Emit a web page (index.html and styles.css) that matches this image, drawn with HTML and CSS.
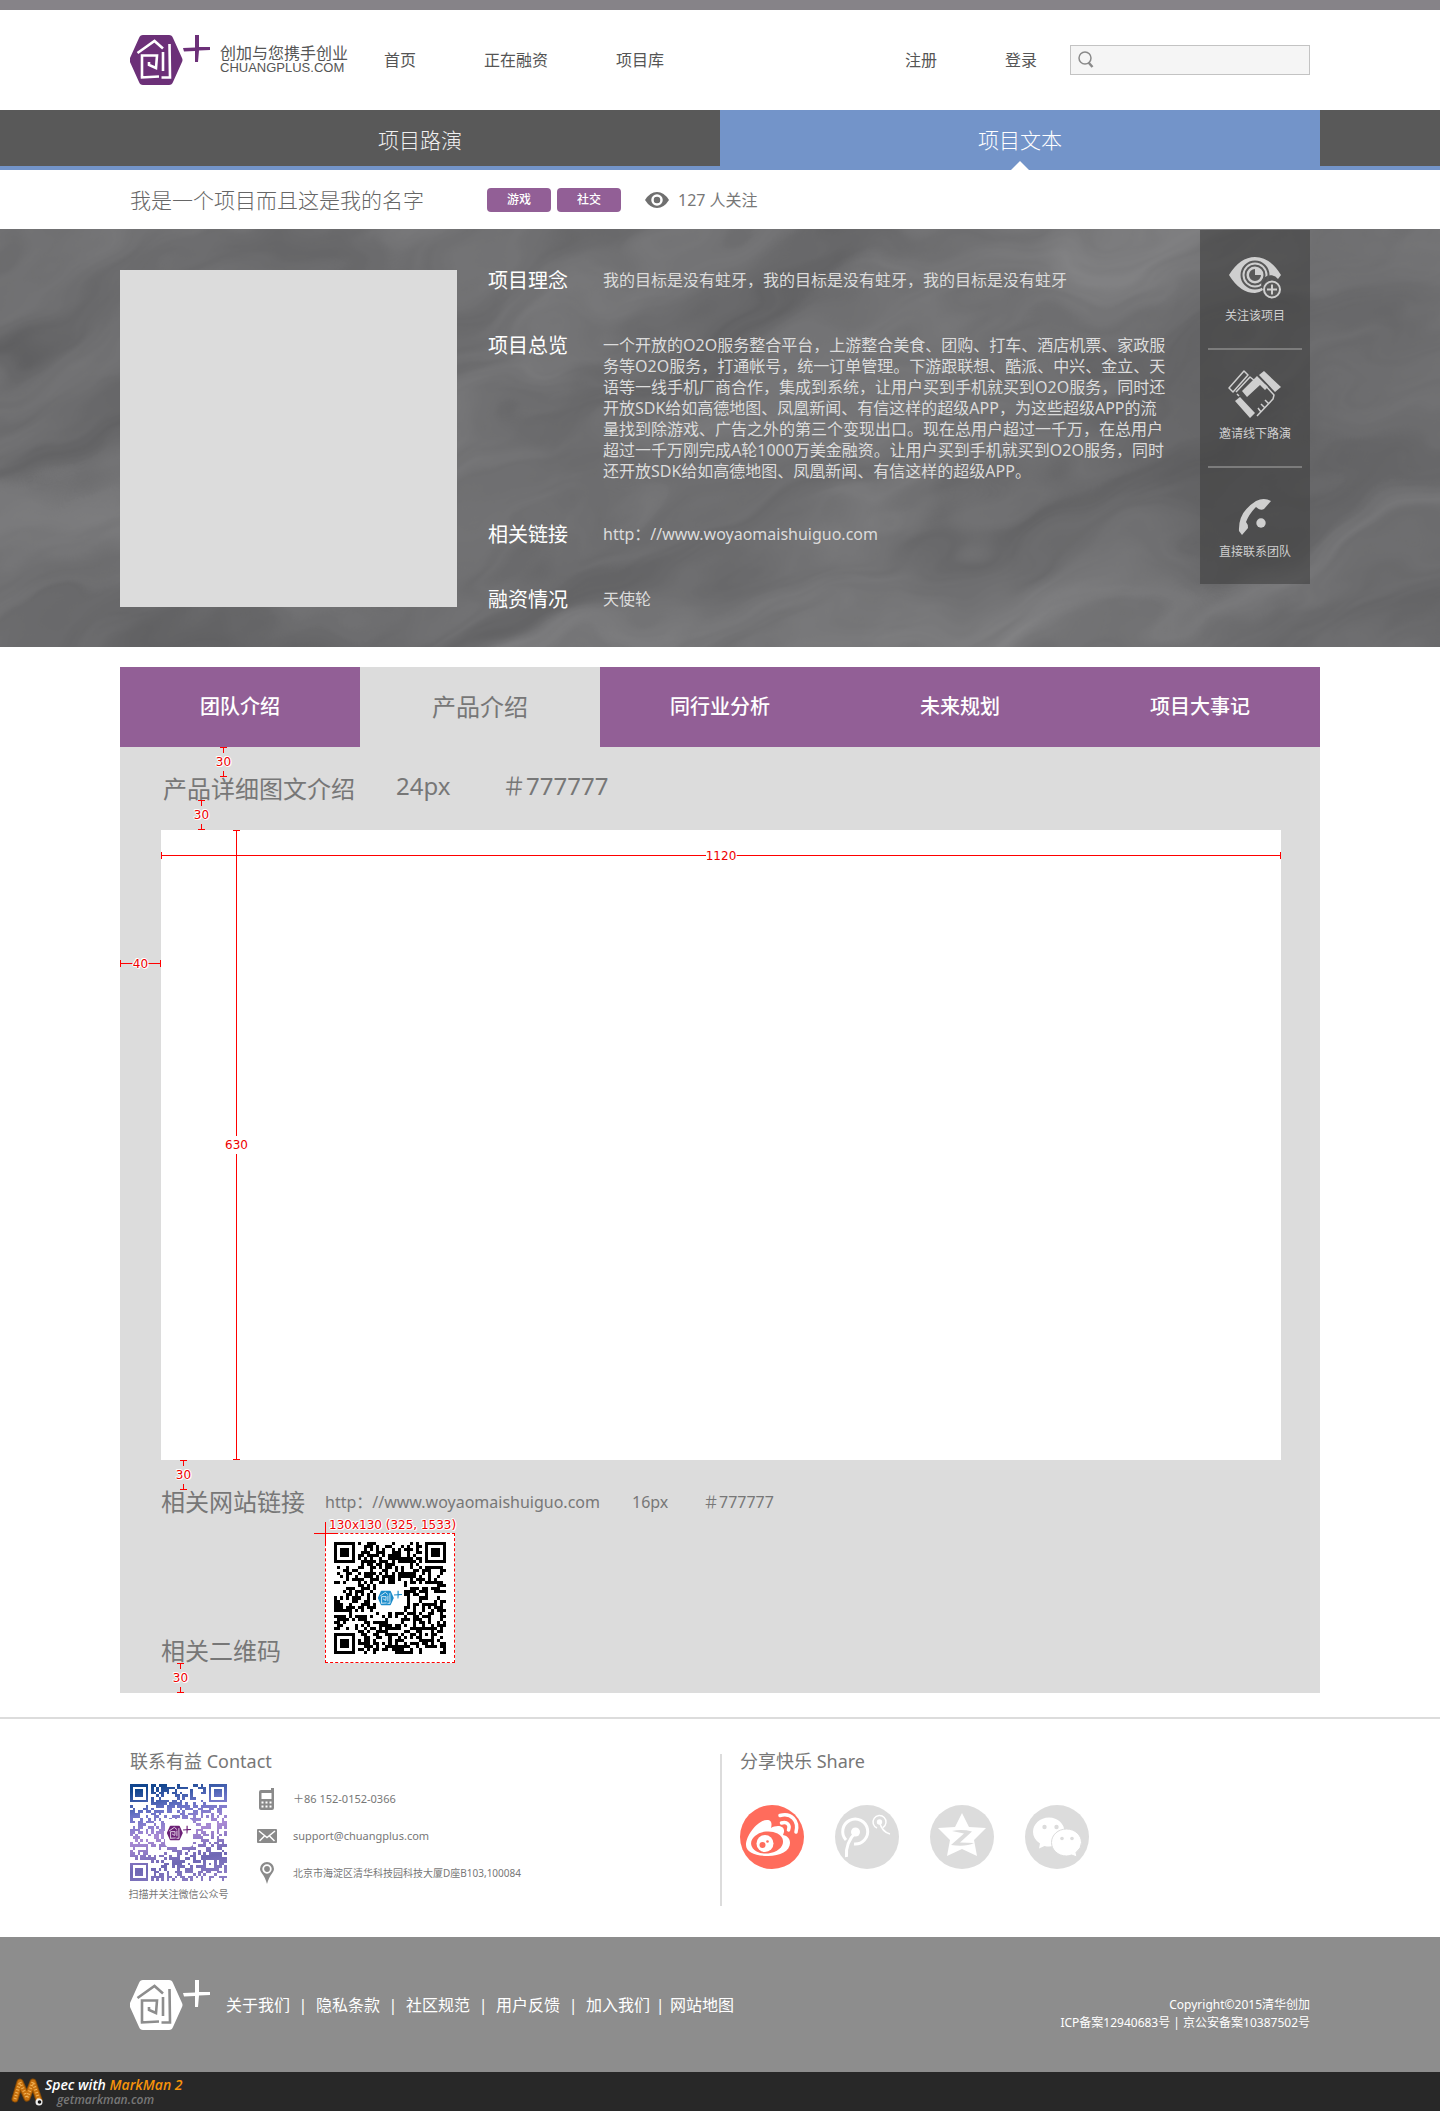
FILE: index.html
```html
<!DOCTYPE html>
<html lang="zh-CN">
<head>
<meta charset="utf-8">
<meta name="viewport" content="width=device-width, initial-scale=1">
<title>创加 - 项目文本</title>
<link rel="stylesheet" href="styles.css">
</head>
<body>
<svg class="defs" width="0" height="0" aria-hidden="true">
  <defs>
    <symbol id="logo" viewBox="0 0 80 50">
      <path fill="currentColor" d="M13 0H39Q42 0 43 3L52 23Q53 25 52 27L43 47Q42 50 39 50H13Q10 50 9 47L0 27Q-1 25 0 23L9 3Q10 0 13 0Z"/>
      <path fill="currentColor" d="M65 0L69 0 69 12 80 12 80 15 69 15.500 68 27 65 27 65 16 54 16.500 53 13 65 12.500Z"/>
      <path class="logo-line" fill="none" stroke-width="2.600" d="M7.500 18L24.500 6 33 13.500M12 42.500V20.500H27L26 33 19 30V27M10.700 42.500L29 41.500M31.500 42.500H40L39.500 9M33 17V36"/>
    </symbol>
  </defs>
</svg>

<header class="header">
  <div class="wrap header-in">
    <a class="brand" href="#">
      <svg class="logo" viewBox="0 0 80 50" aria-hidden="true"><use href="#logo"/></svg>
      <span class="brand-text"><span class="brand-cn">创加与您携手创业</span><span class="brand-en">CHUANGPLUS.COM</span></span>
    </a>
    <nav class="menu"><a href="#">首页</a><a href="#">正在融资</a><a href="#">项目库</a></nav>
    <div class="account"><a href="#">注册</a><a href="#">登录</a></div>
    <form class="search">
      <svg width="16" height="18" viewBox="0 0 16 18" fill="none" stroke="#8a8a8a" aria-hidden="true"><circle cx="7" cy="7" r="6" stroke-width="1.500"/><path d="M10.500 11.500L14.500 16" stroke-width="2.500"/></svg>
      <input type="search" aria-label="搜索">
    </form>
  </div>
</header>

<nav class="modes">
  <div class="wrap modes-in"><a href="#">项目路演</a><a class="on" href="#">项目文本</a></div>
</nav>

<main>
  <div class="wrap title-row">
    <h1>我是一个项目而且这是我的名字</h1>
    <div class="tags"><a href="#">游戏</a><a href="#">社交</a></div>
    <p class="followers">
      <svg width="24" height="16" viewBox="0 0 24 16" aria-hidden="true"><path fill="#6f6f6f" d="M0 8Q5 0 12 0T24 8Q19 16 12 16T0 8Z"/><circle cx="12" cy="8" r="4.500" fill="none" stroke="#fff" stroke-width="2.500"/><path d="M12 8V5A3 3 0 1 0 15 8Z" fill="#6f6f6f"/></svg>
      127 人关注
    </p>
  </div>

  <section class="hero">
    <svg class="marble" aria-hidden="true">
      <filter id="veins" x="0" y="0" width="100%" height="100%" color-interpolation-filters="sRGB">
        <feTurbulence type="fractalNoise" baseFrequency="0.002 0.009" numOctaves="5" seed="12" result="cloud"/>
        <feTurbulence type="fractalNoise" baseFrequency="0.005 0.009" numOctaves="3" seed="4" result="swirl"/>
        <feDisplacementMap in="cloud" in2="swirl" scale="220" xChannelSelector="R" yChannelSelector="G"/>
        <feColorMatrix values="0.190 0 0 0 0.342  0.190 0 0 0 0.342  0.190 0 0 0 0.349  0 0 0 0 1"/>
      </filter>
      <rect x="-20%" y="-100%" width="140%" height="300%" filter="url(#veins)" transform="rotate(-20 720 200)"/>
    </svg>
    <div class="wrap hero-in">
      <div class="cover"></div>
      <dl class="facts">
        <div><dt>项目理念</dt><dd>我的目标是没有蛀牙，我的目标是没有蛀牙，我的目标是没有蛀牙</dd></div>
        <div><dt>项目总览</dt><dd>一个开放的O2O服务整合平台，上游整合美食、团购、打车、酒店机票、家政服<br>务等O2O服务，打通帐号，统一订单管理。下游跟联想、酷派、中兴、金立、天<br>语等一线手机厂商合作，集成到系统，让用户买到手机就买到O2O服务，同时还<br>开放SDK给如高德地图、凤凰新闻、有信这样的超级APP，为这些超级APP的流<br>量找到除游戏、广告之外的第三个变现出口。现在总用户超过一千万，在总用户<br>超过一千万刚完成A轮1000万美金融资。让用户买到手机就买到O2O服务，同时<br>还开放SDK给如高德地图、凤凰新闻、有信这样的超级APP。</dd></div>
        <div><dt>相关链接</dt><dd><a href="#">http：//www.woyaomaishuiguo.com</a></dd></div>
        <div><dt>融资情况</dt><dd>天使轮</dd></div>
      </dl>
      <div class="actions">
        <button type="button">
          <svg width="54" height="44" viewBox="0 0 54 44" aria-hidden="true"><path fill="#cfcfcf" d="M1 19Q12 1 27 1T53 19L50 23A9 9 0 0 0 35 34Q31 37 27 37Q12 37 1 19Z"/><g fill="none" stroke="#595959" stroke-width="2"><circle cx="27" cy="19" r="13.500"/><circle cx="27" cy="19" r="9.500"/></g><path fill="#595959" d="M27 13V19H33A6 6 0 1 1 27 13Z"/><circle cx="44" cy="33.500" r="8" fill="#595959" stroke="#cfcfcf" stroke-width="2"/><path d="M44 28.500V38.500M39 33.500H49" stroke="#cfcfcf" stroke-width="2"/></svg>
          <span>关注该项目</span>
        </button>
        <button type="button">
          <svg width="54" height="48" viewBox="0 0 54 48" aria-hidden="true"><g fill="none" stroke="#cfcfcf" stroke-width="1.500" stroke-linejoin="round"><path d="M1 18L16 1 20 5 5 22Z"/><path d="M8 22L22 7 27 11M11 26L9 24"/><path d="M29 46L45 29 46 25 37 15M33 42L30 38M37 38L33 34M41 34L37 30"/></g><path fill="#cfcfcf" d="M14 21L29 6 40 17 37 20 32 15 19 27ZM31 5L36 1 53 17 47 22ZM7 31L12 27 27 43 22 48Z"/></svg>
          <span>邀请线下路演</span>
        </button>
        <button type="button">
          <svg width="34" height="38" viewBox="0 0 34 38" aria-hidden="true"><path fill="#cfcfcf" d="M33 3Q26-1 18 3Q0 14 1 33L4 37 10 30Q10 26 8 24Q11 16 18 9Q22 13 26 11Z"/><circle cx="23" cy="25" r="4.700" fill="#cfcfcf"/></svg>
          <span>直接联系团队</span>
        </button>
      </div>
    </div>
  </section>

  <section class="wrap detail">
    <nav class="sections"><a href="#">团队介绍</a><a class="on" href="#">产品介绍</a><a href="#">同行业分析</a><a href="#">未来规划</a><a href="#">项目大事记</a></nav>
    <div class="panel">
      <div class="panel-head"><h2>产品详细图文介绍</h2><span>24px</span><span>＃777777</span>
        <i class="dim tall head-top"><b>30</b></i><i class="dim tall head-bottom"><b>30</b></i>
      </div>
      <div class="canvas">
        <i class="dim wide box-width"><b>1120</b></i>
        <i class="dim tall box-height"><b>630</b></i>
        <i class="dim wide box-margin"><b>40</b></i>
      </div>
      <div class="row link-row"><h2>相关网站链接</h2><a href="#">http：//www.woyaomaishuiguo.com</a><span>16px</span><span>＃777777</span>
        <i class="dim tall link-top"><b>30</b></i>
      </div>
      <div class="row code-row"><h2>相关二维码</h2>
        <div class="code">
          <svg class="qr" data-seed="7" viewBox="0 0 37 37" role="img" aria-label="项目二维码"></svg>
          <span class="code-logo blue"><svg viewBox="0 0 80 50"><use href="#logo"/></svg></span>
          <b class="code-size">130x130 (325, 1533)</b>
        </div>
        <i class="dim tall code-bottom"><b>30</b></i>
      </div>
    </div>
  </section>
</main>

<footer>
  <div class="contact-band">
    <div class="wrap contact-in">
      <section class="contact">
        <h3>联系有益 Contact</h3>
        <div class="contact-body">
          <div class="wechat">
            <div class="wechat-code">
              <svg class="qr" data-seed="23" data-fill="url(#dusk)" viewBox="0 0 37 37" role="img" aria-label="微信公众号二维码"><defs><linearGradient id="dusk" gradientUnits="userSpaceOnUse" x1="14" y1="0" x2="22" y2="37"><stop offset="0" stop-color="#12468f"/><stop offset=".25" stop-color="#6c74c8"/><stop offset=".5" stop-color="#a98ad4"/><stop offset=".8" stop-color="#6f68b4"/><stop offset="1" stop-color="#8a7cc4"/></linearGradient></defs></svg>
              <span class="code-logo purple"><svg viewBox="0 0 80 50"><use href="#logo"/></svg></span>
            </div>
            <p>扫描并关注微信公众号</p>
          </div>
          <ul class="ways">
            <li><svg width="20" height="22" viewBox="0 0 20 22" aria-hidden="true"><path fill="#8a8a8a" d="M4 2H14V0H17V20Q17 22 15 22H4Q2 22 2 20V4Q2 2 4 2Z"/><path fill="#fff" d="M4.500 5H14.500V11H4.500ZM4.500 13.500h2v2h-2zM8.500 13.500h2v2h-2zM12.500 13.500h2v2h-2zM4.500 17.500h2v2h-2zM8.500 17.500h2v2h-2zM12.500 17.500h2v2h-2z"/></svg>＋86 152-0152-0366</li>
            <li><svg width="20" height="14" viewBox="0 0 20 14" aria-hidden="true"><rect width="20" height="14" rx="1" fill="#8a8a8a"/><path d="M2 2L10 8.500 18 2M2.500 12L7.500 7M17.500 12L12.500 7" fill="none" stroke="#fff" stroke-width="1.500"/></svg><a href="#">support@chuangplus.com</a></li>
            <li class="address"><svg width="20" height="22" viewBox="0 0 20 22" aria-hidden="true"><path fill="#8a8a8a" d="M10 22Q8 15 5 11.500Q3 9 3 7A7 7 0 0 1 17 7Q17 9 15 11.500Q12 15 10 22Z"/><circle cx="10" cy="7" r="3.800" fill="none" stroke="#fff" stroke-width="1.800"/></svg>北京市海淀区清华科技园科技大厦D座B103,100084</li>
          </ul>
        </div>
      </section>
      <section class="share">
        <h3>分享快乐 Share</h3>
        <div class="share-list">
          <a href="#" aria-label="新浪微博"><svg viewBox="0 0 64 64"><circle cx="32" cy="32" r="32" fill="#ff6c5c"/><path fill="#fff" d="M6 40C6 30 18 15 27 15C32 15 32 19 31 23C36 20 45 20 44 27L43 30C48 31 50 34 50 38C50 46 40 51 28 51C15 51 6 47 6 40Z"/><ellipse cx="27" cy="37.500" rx="16" ry="11" fill="#ff6c5c" transform="rotate(-6 27 37)"/><circle cx="25" cy="38.500" r="8.500" fill="#fff"/><circle cx="22.500" cy="40" r="3" fill="#ff6c5c"/><circle cx="27.500" cy="36.500" r="1.300" fill="#ff6c5c"/><path d="M40 10.500C51 7 59 16 56 27M41.500 18C47 16 50.500 20 48.500 25" fill="none" stroke="#fff" stroke-width="3.500" stroke-linecap="round"/></svg></a>
          <a href="#" aria-label="腾讯微博"><svg viewBox="0 0 64 64"><circle cx="32" cy="32" r="32" fill="#dcdcdc"/><g fill="none" stroke="#fff"><path d="M11 35A12.500 12.500 0 1 1 19 39" stroke-width="3"/><path d="M21 27Q10 38 11.500 52" stroke-width="3"/><path d="M42 23A6.500 6.500 0 1 1 48 22.500M44.500 17Q47 27 55 29" stroke-width="1.500"/></g><circle cx="20.500" cy="27" r="4.500" fill="#fff"/><circle cx="44.500" cy="17" r="2.700" fill="#fff"/></svg></a>
          <a href="#" aria-label="QQ空间"><svg viewBox="0 0 64 64"><circle cx="32" cy="32" r="32" fill="#dcdcdc"/><path fill="#fff" d="M32 8L39 22 56 23 44 35 47 51 32 44 17 51 20 35 8 23 25 22Z"/><path fill="#dcdcdc" d="M22 26Q32 24 42 26.500L30 37.500 44 38Q36 42 21 40L34 28.500Z"/></svg></a>
          <a href="#" aria-label="微信"><svg viewBox="0 0 64 64"><circle cx="32" cy="32" r="32" fill="#dcdcdc"/><path fill="#fff" d="M24 12.500C33 12.500 39.500 19 39.500 27S33 41.500 24 41.500Q21.500 41.500 19.500 41L14 43.500 15 38.500Q8 34 8 27C8 19 15 12.500 24 12.500Z"/><path fill="#fff" stroke="#dcdcdc" d="M41.500 24C50 24 56.500 30 56.500 37.500Q56.500 43 51 47.500L52 52 46.500 50Q44 51 41.500 51C33 51 26.500 45 26.500 37.500S33 24 41.500 24Z"/><g fill="#dcdcdc"><circle cx="19.500" cy="22" r="2.200"/><circle cx="31.500" cy="22" r="2.200"/><circle cx="37" cy="33.500" r="1.800"/><circle cx="47" cy="33.500" r="1.800"/></g></svg></a>
        </div>
      </section>
    </div>
  </div>
  <div class="site-band">
    <div class="wrap site-in">
      <svg class="logo" viewBox="0 0 80 50" aria-hidden="true"><use href="#logo"/></svg>
      <nav class="site-links"><a href="#">关于我们</a><a href="#">隐私条款</a><a href="#">社区规范</a><a href="#">用户反馈</a><a href="#">加入我们</a><a href="#">网站地图</a></nav>
      <p class="legal">Copyright©2015清华创加<br>ICP备案12940683号 | 京公安备案10387502号</p>
    </div>
  </div>
  <div class="spec-band">
    <svg width="34" height="30" viewBox="0 0 34 30" aria-hidden="true"><g fill="none" stroke-linecap="round" stroke-linejoin="round"><path d="M4 22L9 5 16 21 22 5 28 23" stroke="#8a4c05" stroke-width="7"/><path d="M4 22L9 5 16 21 22 5 28 23" stroke="#c9720f" stroke-width="5"/><path d="M4 22L9 5 16 21 22 5 28 23" stroke="#f3b65a" stroke-width="3" stroke-dasharray="1 2" stroke-linecap="butt"/></g><circle cx="28" cy="25" r="3.500" fill="#eee"/><circle cx="28.500" cy="25" r="1.800" fill="#111"/></svg>
    <div class="spec-text"><p>Spec with <em>MarkMan 2</em></p><p class="spec-site">getmarkman.com</p></div>
  </div>
</footer>
<script src="qr.js"></script>
</body>
</html>
```
FILE: styles.css
```css
* { box-sizing: border-box; }

body {
  margin: 0;
  background: #fff;
  color: #777;
  font: 16px/24px "Noto Sans", "Noto Sans CJK SC", sans-serif;
}

h1, h2, h3, p, dl, dd, ul { margin: 0; padding: 0; }
h1, h2, h3 { font-weight: 400; }
ul { list-style: none; }
a { color: inherit; text-decoration: none; }
svg { display: block; flex: none; }
.defs { position: absolute; }

.wrap { max-width: 1200px; margin: 0 auto; }

.logo { width: 80px; height: 50px; overflow: visible; color: #6c3078; }
.logo-line { stroke: var(--logo-line, #fff); }

/* header */
.header { border-top: 10px solid #868388; color: #555; }
.header-in { display: flex; align-items: center; min-height: 100px; padding: 0 10px; }
.brand { display: flex; align-items: center; gap: 10px; width: 254px; }
.brand-text { display: flex; flex-direction: column; }
.brand-cn { font-size: 16px; line-height: 15px; white-space: nowrap; }
.brand-en { font: 13px/13px "Liberation Sans", sans-serif; }
.menu, .account { display: flex; gap: 68px; white-space: nowrap; }
.account { margin-left: auto; margin-right: 33px; }
.search { display: flex; align-items: center; gap: 6px; width: 240px; height: 30px; padding: 0 7px; border: 1px solid #c3c3c3; background: #f5f5f5; }
.search input { flex: 1; min-width: 0; border: 0; background: none; font: inherit; color: inherit; outline: 0; }

/* page mode switch */
.modes { background: #595959; border-bottom: 4px solid #7394c9; }
.modes-in { display: grid; grid-template-columns: 1fr 1fr; height: 56px; }
.modes a { position: relative; height: 60px; font-size: 21px; font-weight: 300; line-height: 60px; text-align: center; color: #f0f0f0; }
.modes .on { background: #7394c9; color: #fff; }
.modes .on::after { content: ""; position: absolute; left: 50%; bottom: 0; margin-left: -9px; border: 9px solid transparent; border-top: 0; border-bottom-color: #fff; }

/* title row */
.title-row { display: flex; align-items: center; min-height: 59px; padding: 0 10px; }
.title-row h1 { width: 357px; color: #666; font-size: 21px; font-weight: 300; white-space: nowrap; }
.tags { display: flex; gap: 6px; }
.tags a { width: 64px; border-radius: 4px; background: #925f96; color: #fff; font-size: 12px; font-weight: 500; text-align: center; }
.followers { display: flex; align-items: center; gap: 9px; margin-left: 24px; }

/* hero */
.hero { position: relative; overflow: hidden; background: #6c6c6e; color: #dcdcdc; }
.marble { position: absolute; inset: 0; width: 100%; height: 100%; }
.hero-in { position: relative; display: flex; align-items: flex-start; padding: 0 10px 35px 0; }
.cover { width: 337px; aspect-ratio: 1; margin: 41px 31px 0 0; background: #dcdcdc; flex: none; }
.facts { display: flex; flex: 1; flex-direction: column; gap: 41px; padding-top: 40px; }
.facts > div { display: flex; }
.facts dt { width: 115px; flex: none; color: #fff; font-size: 20px; }
.facts dd { line-height: 21px; padding-top: 1px; white-space: nowrap; }
.actions { width: 110px; margin-top: 1px; padding: 0 8px; background: rgba(64, 64, 64, .6); flex: none; }
.actions button { display: flex; flex-direction: column; align-items: center; justify-content: flex-end; gap: 8px; width: 100%; height: 118px; padding: 0 0 24px; border: 0; background: none; color: #cfcfcf; font: 12px/16px "Noto Sans", "Noto Sans CJK SC", sans-serif; white-space: nowrap; }
.actions button + button { border-top: 2px solid #7c7c7c; }

/* project detail */
.detail { margin-top: 20px; }
.sections { display: grid; grid-template-columns: repeat(5, 1fr); background: #925f96; color: #fff; }
.sections a { font-size: 20px; font-weight: 500; line-height: 80px; text-align: center; }
.sections .on { background: #dcdcdc; color: #777; font-size: 24px; font-weight: 400; }
.panel { padding: 0 39px 30px 41px; background: #dcdcdc; }
.panel h2 { font-size: 24px; line-height: 24px; white-space: nowrap; }
.panel-head { position: relative; display: flex; align-items: center; height: 83px; font-size: 24px; white-space: nowrap; }
.panel-head h2 { width: 235px; padding-left: 2px; }
.panel-head span { width: 106px; padding-bottom: 6px; }
.canvas { position: relative; aspect-ratio: 1120 / 630; background: #fff; }
.row { position: relative; display: flex; white-space: nowrap; }
.row h2 { width: 164px; flex: none; }
.link-row { align-items: center; margin: 30px 0 19px; }
.link-row a { width: 307px; }
.link-row span { width: 71px; }
.code-row { align-items: flex-end; }
.code { position: relative; width: 130px; height: 130px; padding: 8px; border: 1px dashed #f00; background: #fff; }
.qr { width: 100%; height: 100%; }
.code-logo { position: absolute; left: 50%; top: 50%; width: 28px; height: 28px; margin: -14px 0 0 -14px; padding: 5px 2px; border-radius: 4px; background: #fff; }
.code-logo svg { width: 100%; height: 100%; overflow: visible; }
.blue { color: #1c8dcb; }
.purple { color: #6c2077; }

/* measurement marks */
.dim { position: absolute; display: flex; align-items: center; justify-content: center; color: #e00; font: 12px/12px "DejaVu Sans", sans-serif; }
.dim b, .code-size { position: relative; font-weight: 400; text-shadow: 1px 0 #fff, -1px 0 #fff, 0 1px #fff, 0 -1px #fff, 1px 1px #fff, -1px -1px #fff; }
.dim::before, .dim::after { content: ""; flex: 1; align-self: stretch; }
.tall { flex-direction: column; width: 7px; border: solid #f00; border-width: 1px 0; }
.tall::before, .tall::after { width: 1px; align-self: center; background: #f00; }
.tall b { padding: 3px 0; }
.wide { height: 7px; border: solid #f00; border-width: 0 1px; }
.wide::before, .wide::after { height: 1px; align-self: center; background: #f00; }
.head-top { left: 59px; top: 0; height: 30px; }
.head-bottom { left: 37px; bottom: 0; height: 30px; }
.box-width { left: 0; right: 0; top: 22px; }
.box-height { left: 72px; top: 0; bottom: 0; }
.box-margin { right: 100%; width: 41px; top: 130px; }
.link-top { left: 19px; bottom: 100%; height: 30px; }
.code-bottom { left: 16px; top: 100%; height: 30px; }
.code-size { position: absolute; left: 3px; bottom: 100%; color: #e00; font: 12px/18px "DejaVu Sans", sans-serif; white-space: nowrap; }
.code::before { content: ""; position: absolute; left: -12px; top: -1px; width: 24px; height: 1px; background: #f00; }
.code::after { content: ""; position: absolute; left: -1px; top: -12px; width: 1px; height: 24px; background: #f00; }

/* contact and share */
.contact-band { margin-top: 24px; border-top: 2px solid #dcdcdc; }
.contact-in { display: grid; grid-template-columns: 1fr 1fr; grid-auto-rows: minmax(152px, auto); padding: 35px 0 31px; }
.contact-in h3 { font-size: 18px; line-height: 14px; }
.contact { padding-left: 10px; }
.contact-body { display: flex; gap: 30px; margin-top: 12px; }
.wechat { width: 97px; padding-top: 4px; }
.wechat-code { position: relative; height: 97px; }
.wechat p { display: flex; justify-content: center; margin-top: 6px; font-size: 10px; line-height: 14px; white-space: nowrap; }
.ways li { display: flex; align-items: center; gap: 16px; height: 37px; font-size: 11px; white-space: nowrap; }
.ways .address { font-size: 10px; }
.share { padding-left: 18px; border-left: 2px solid #dcdcdc; }
.share-list { display: flex; gap: 31px; margin-top: 37px; }
.share-list svg { width: 64px; height: 64px; }

/* site footer */
.site-band { background: #8d8d8d; color: #fff; --logo-line: #8d8d8d; }
.site-band .logo { color: #fff; }
.site-in { display: flex; align-items: center; min-height: 135px; padding: 0 10px; }
.site-links { display: flex; margin-left: 16px; white-space: nowrap; }
.site-links a + a::before { content: "|"; display: inline-block; width: 26px; text-align: center; }
.site-links a:last-child::before { width: 20px; }
.legal { margin: 18px 0 0 auto; font-size: 12px; line-height: 18px; text-align: right; }
.spec-band { display: flex; align-items: center; min-height: 39px; padding-left: 11px; background: #282828; color: #fff; }
.spec-text { font: italic 600 14px/16px "Open Sans", sans-serif; white-space: nowrap; }
.spec-text em { color: #f7930a; }
.spec-site { padding-left: 12px; color: #777; font-size: 12px; line-height: 14px; }
```
FILE: qr.js
```js
// Draws the module grid of each code: three finders, one alignment mark, data.
const SIZE = 37;

function finder(x, y, cx, cy) {
  const d = Math.max(Math.abs(x - cx), Math.abs(y - cy));
  return d > 4 ? null : d !== 2 && d !== 4;
}

function draw(svg) {
  let state = Number(svg.dataset.seed);
  let path = "";
  for (let y = 0; y < SIZE; y++) {
    for (let x = 0; x < SIZE; x++) {
      state = (state * 1103515245 + 12345) % 2147483648;
      let on = (state >> 16) % 100 < 50;
      for (const [cx, cy] of [[3, 3], [33, 3], [3, 33]]) {
        const mark = finder(x, y, cx, cy);
        if (mark !== null) on = mark;
      }
      const align = Math.max(Math.abs(x - 30), Math.abs(y - 30));
      if (align < 3) on = align !== 1;
      if (Math.abs(x - 18) < 5 && Math.abs(y - 18) < 5) on = false;
      if (on) path += `M${x} ${y}h1v1h-1z`;
    }
  }
  const shape = document.createElementNS("http://www.w3.org/2000/svg", "path");
  shape.setAttribute("d", path);
  shape.setAttribute("fill", svg.dataset.fill || "#000");
  shape.setAttribute("shape-rendering", "crispEdges");
  svg.appendChild(shape);
}

document.querySelectorAll(".qr").forEach(draw);
```
